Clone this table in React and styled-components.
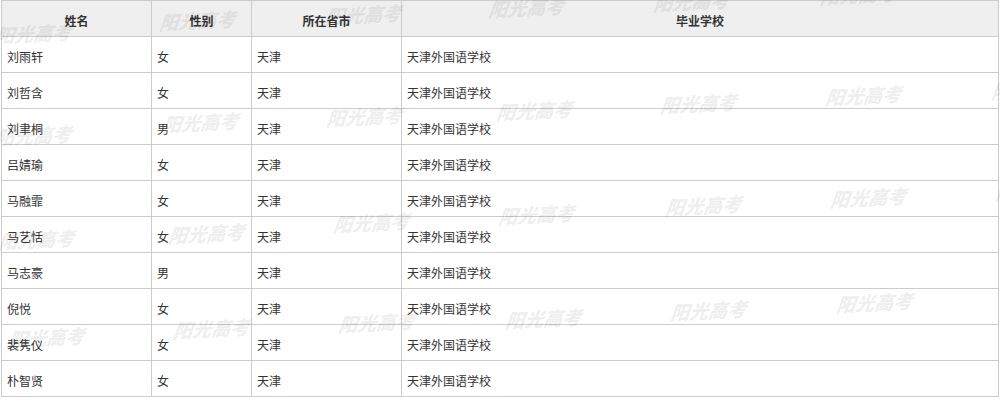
import React from "react";
import styled, { createGlobalStyle } from "styled-components";

const GlobalStyle = createGlobalStyle`
  html, body {
    margin: 0;
    padding: 0;
    background: #ffffff;
  }
  body {
    font-family: "Noto Sans CJK SC", "Noto Sans", sans-serif;
    font-size: 12px;
    color: #333333;
  }
`;

const Page = styled.div`
  position: relative;
  width: 1000px;
  height: 411px;
  overflow: hidden;
`;

const Table = styled.table`
  width: 998px;
  margin-left: 1px;
  border-collapse: collapse;
  table-layout: fixed;
  font-size: 12px;
`;

const Row = styled.tr`
  height: 36px;
`;

const HeadCell = styled.th`
  border: 1px solid #cccccc;
  background: #efefef;
  color: #333333;
  font-weight: 700;
  text-align: center;
  vertical-align: middle;
  padding: 5px 5px 0;
  line-height: 16px;
`;

const Cell = styled.td`
  border: 1px solid #cccccc;
  color: #333333;
  text-align: left;
  vertical-align: middle;
  padding: 5px 5px 0;
  line-height: 16px;
  white-space: nowrap;
`;

const WatermarkLayer = styled.div`
  position: absolute;
  inset: 0;
  pointer-events: none;
  z-index: 1;
`;

const Watermark = styled.span`
  position: absolute;
  font-family: "Noto Sans CJK SC", sans-serif;
  font-size: 19px;
  line-height: 20px;
  font-weight: 900;
  font-style: italic;
  letter-spacing: 0;
  color: rgba(0, 0, 0, 0.085);
  white-space: nowrap;
  transform: rotate(-3deg) skewX(-10deg);
  transform-origin: left top;
`;

const columns = [
  { title: "姓名", width: 150 },
  { title: "性别", width: 100 },
  { title: "所在省市", width: 150 },
  { title: "毕业学校", width: 597 },
];

const students = [
  ["刘雨轩", "女"],
  ["刘哲含", "女"],
  ["刘聿桐", "男"],
  ["吕婧瑜", "女"],
  ["马融霏", "女"],
  ["马艺恬", "女"],
  ["马志豪", "男"],
  ["倪悦", "女"],
  ["裴隽仪", "女"],
  ["朴智贤", "女"],
];

const marks = [
  [-3, 25], [161, 12], [327, 6], [490, -1], [655, -7], [822, -14],
  [-3, 127], [164, 114], [328, 108], [498, 102], [662, 95], [827, 87], [993, 81],
  [0, 231], [170, 225], [335, 214], [500, 206], [667, 197], [832, 189], [997, 182],
  [10, 329], [175, 320], [340, 314], [507, 310], [672, 302], [838, 294],
];

export default function App() {
  return (
    <>
      <GlobalStyle />
      <Page>
        <Table>
          <colgroup>
            {columns.map((c) => (
              <col key={c.title} style={{ width: c.width }} />
            ))}
          </colgroup>
          <thead>
            <Row>
              {columns.map((c) => (
                <HeadCell key={c.title}>{c.title}</HeadCell>
              ))}
            </Row>
          </thead>
          <tbody>
            {students.map(([name, gender]) => (
              <Row key={name}>
                <Cell>{name}</Cell>
                <Cell>{gender}</Cell>
                <Cell>天津</Cell>
                <Cell>天津外国语学校</Cell>
              </Row>
            ))}
          </tbody>
        </Table>
        <WatermarkLayer>
          {marks.map(([x, y], i) => (
            <Watermark key={i} style={{ left: x, top: y }}>
              阳光高考
            </Watermark>
          ))}
        </WatermarkLayer>
      </Page>
    </>
  );
}
